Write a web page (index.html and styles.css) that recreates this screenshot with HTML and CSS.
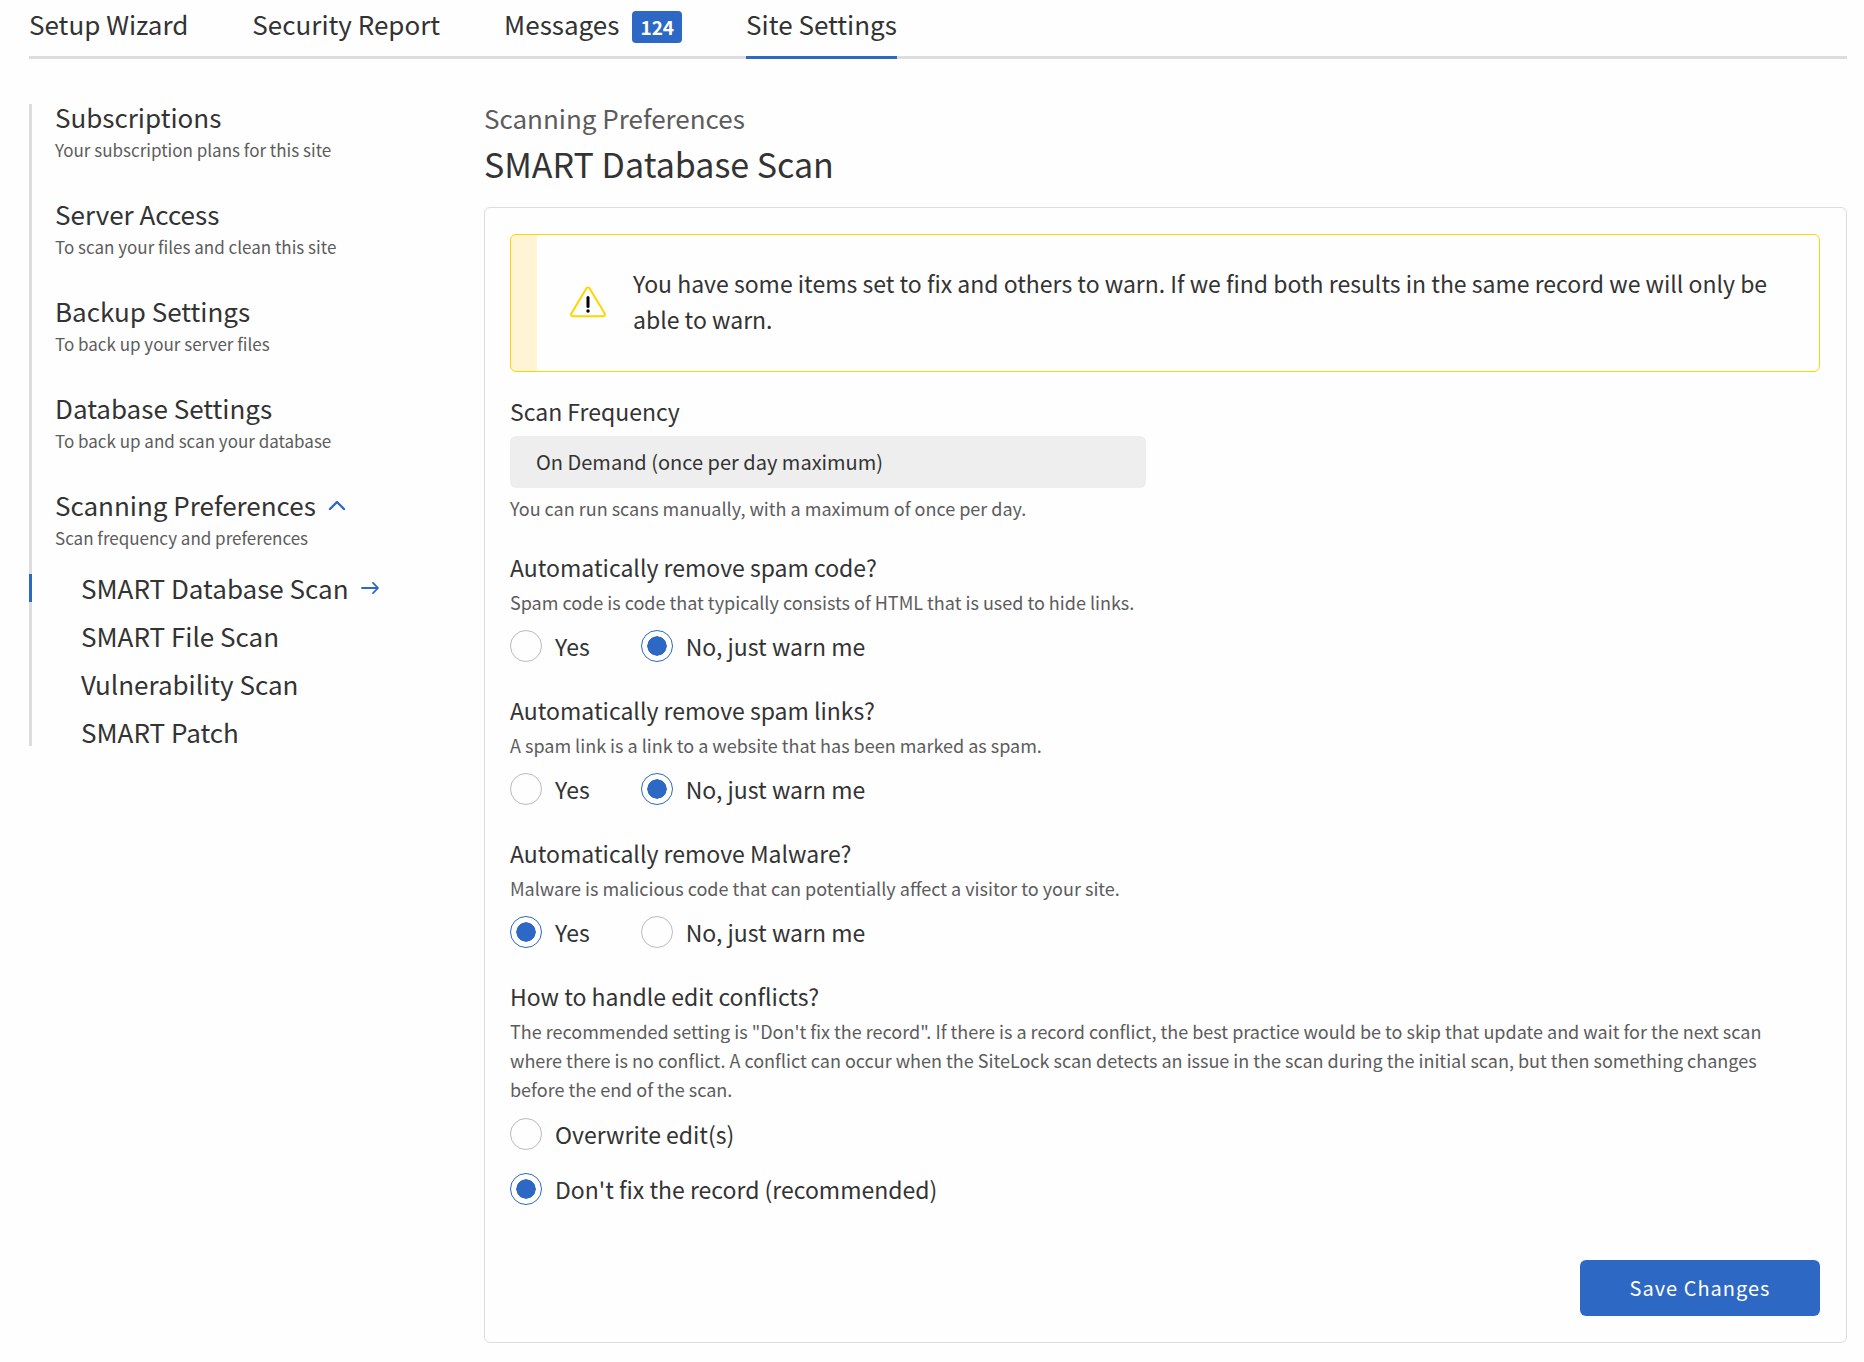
FILE: index.html
```html
<!DOCTYPE html>
<html lang="en">
<head>
<meta charset="utf-8">
<meta name="viewport" content="width=device-width, initial-scale=1">
<title>Site Settings</title>
<link rel="stylesheet" href="styles.css">
</head>
<body>
<nav class="tabs" aria-label="Main">
  <a class="tab" href="#setup">Setup Wizard</a>
  <a class="tab" href="#report">Security Report</a>
  <a class="tab" href="#messages">Messages <span class="badge">124</span></a>
  <a class="tab tab-active" href="#settings" aria-current="page">Site Settings</a>
</nav>
<div class="layout">
  <nav class="sidebar" aria-label="Site settings">
    <a class="side-item" href="#subscriptions"><span class="side-title">Subscriptions</span><span class="side-note">Your subscription plans for this site</span></a>
    <a class="side-item" href="#server"><span class="side-title">Server Access</span><span class="side-note">To scan your files and clean this site</span></a>
    <a class="side-item" href="#backup"><span class="side-title">Backup Settings</span><span class="side-note">To back up your server files</span></a>
    <a class="side-item" href="#database"><span class="side-title">Database Settings</span><span class="side-note">To back up and scan your database</span></a>
    <a class="side-item" href="#scanning"><span class="side-title">Scanning Preferences
      <svg class="side-icon" width="18" height="18" viewBox="0 0 18 18" fill="none" stroke="currentColor" stroke-width="2.4" stroke-linecap="round" stroke-linejoin="round" aria-hidden="true"><path d="M2 13 9 6l7 7"/></svg></span><span class="side-note">Scan frequency and preferences</span></a>
    <ul class="sub-list">
      <li><a class="sub-item sub-active" href="#db-scan" aria-current="page">SMART Database Scan
        <svg class="side-icon" width="18" height="18" viewBox="0 0 18 18" fill="none" stroke="currentColor" stroke-width="1.8" stroke-linecap="round" stroke-linejoin="round" aria-hidden="true"><path d="M1 9h16M12 3.800 17 9l-5 5.200"/></svg></a></li>
      <li><a class="sub-item" href="#file-scan">SMART File Scan</a></li>
      <li><a class="sub-item" href="#vuln-scan">Vulnerability Scan</a></li>
      <li><a class="sub-item" href="#patch">SMART Patch</a></li>
    </ul>
  </nav>
  <main class="main">
    <p class="section-name">Scanning Preferences</p>
    <h1 class="page-title">SMART Database Scan</h1>
    <form class="card">
      <div class="alert" role="alert">
        <svg class="alert-icon" width="36" height="32" viewBox="0 0 36 32" fill="none" aria-hidden="true">
          <path d="M16.600 2.100a1.800 1.800 0 0 1 2.800 0L34.700 27.600a1.700 1.700 0 0 1-1.500 2.600H2.800a1.700 1.700 0 0 1-1.500-2.600z" stroke="#ffd500" stroke-width="2"/>
          <path d="M18 11.500v9" stroke="#000" stroke-width="3" stroke-linecap="round"/>
          <circle cx="18" cy="25" r="1.700" fill="#000"/>
        </svg>
        <p class="alert-text">You have some items set to fix and others to warn. If we find both results in the same record we will only be able to warn.</p>
      </div>
      <div class="field">
        <label class="question" for="frequency">Scan Frequency</label>
        <input class="readonly" id="frequency" type="text" value="On Demand (once per day maximum)" readonly>
        <p class="help">You can run scans manually, with a maximum of once per day.</p>
      </div>
      <fieldset class="group">
        <legend class="question">Automatically remove spam code?</legend>
        <p class="help">Spam code is code that typically consists of HTML that is used to hide links.</p>
        <div class="options">
          <label class="option"><input class="radio" type="radio" name="code">Yes</label>
          <label class="option"><input class="radio" type="radio" name="code" checked>No, just warn me</label>
        </div>
      </fieldset>
      <fieldset class="group">
        <legend class="question">Automatically remove spam links?</legend>
        <p class="help">A spam link is a link to a website that has been marked as spam.</p>
        <div class="options">
          <label class="option"><input class="radio" type="radio" name="links">Yes</label>
          <label class="option"><input class="radio" type="radio" name="links" checked>No, just warn me</label>
        </div>
      </fieldset>
      <fieldset class="group">
        <legend class="question">Automatically remove Malware?</legend>
        <p class="help">Malware is malicious code that can potentially affect a visitor to your site.</p>
        <div class="options">
          <label class="option"><input class="radio" type="radio" name="malware" checked>Yes</label>
          <label class="option"><input class="radio" type="radio" name="malware">No, just warn me</label>
        </div>
      </fieldset>
      <fieldset class="group">
        <legend class="question">How to handle edit conflicts?</legend>
        <p class="help">The recommended setting is "Don't fix the record". If there is a record conflict, the best practice would be to skip that update and wait for the next scan where there is no conflict. A conflict can occur when the SiteLock scan detects an issue in the scan during the initial scan, but then something changes before the end of the scan.</p>
        <div class="options options-stacked">
          <label class="option"><input class="radio" type="radio" name="conflicts">Overwrite edit(s)</label>
          <label class="option"><input class="radio" type="radio" name="conflicts" checked>Don't fix the record (recommended)</label>
        </div>
      </fieldset>
      <div class="actions"><button class="save" type="submit">Save Changes</button></div>
    </form>
  </main>
</div>
</body>
</html>
```

FILE: styles.css
```css
* { box-sizing: border-box; }

body {
  margin: 0;
  padding: 0 17px 18px 29px;
  background: #fefefe;
  color: #333;
  font-family: "Noto Sans CJK JP", "Noto Sans CJK SC", sans-serif;
  font-size: 23px;
  line-height: 32px;
}

p, h1, ul, fieldset, legend { margin: 0; padding: 0; border: 0; font-weight: 400; }
ul { list-style: none; }
a { color: inherit; text-decoration: none; }
fieldset { min-width: 0; }

/* Top tabs */
.tabs {
  display: flex;
  gap: 64px;
  box-shadow: inset 0 -3px #ddd;
  font-size: 26px;
}
.tab {
  display: flex;
  align-items: baseline;
  gap: 13px;
  padding: 8px 0 16px;
  border-bottom: 3px solid transparent;
}
.tab-active { border-bottom-color: #2d68c4; }
.badge {
  height: 32px;
  margin-bottom: -8px;
  padding: 0 8px;
  border-radius: 4px;
  background: #2d68c4;
  color: #fff;
  font-size: 19px;
  font-weight: 700;
}

.layout {
  display: grid;
  grid-template-columns: 455px minmax(0, 1fr);
  align-items: start;
  padding-top: 45px;
}

/* Sidebar */
.sidebar {
  border-left: 3px solid #ddd;
  font-size: 26px;
  line-height: 28px;
}
.side-item {
  display: flex;
  flex-direction: column;
  gap: 8px;
  margin-bottom: 39px;
  padding-left: 23px;
}
.side-title, .sub-item { display: flex; align-items: center; gap: 12px; }
.side-title { line-height: 26px; }
.side-note { color: #5c5c5c; font-size: 17px; line-height: 24px; }
.side-icon { color: #2d68c4; }
.sub-list { display: grid; gap: 20px; margin-top: -15px; }
.sub-item {
  margin-left: -3px;
  padding-left: 49px;
  border-left: 3px solid transparent;
}
.sub-active { border-left-color: #2d68c4; }

/* Main column */
.section-name { color: #5c5c5c; font-size: 26px; line-height: 28px; }
.page-title { margin: 10px 0 21px; font-size: 34px; line-height: 44px; }
.card {
  padding: 26px 26px 26px 25px;
  border: 1px solid #ddd;
  border-radius: 6px;
}

.alert {
  display: flex;
  align-items: center;
  gap: 27px;
  margin-bottom: 23px;
  padding: 30px 48px 34px 59px;
  border: 1px solid #ffd500;
  border-radius: 6px;
  background: linear-gradient(to right, #fff5d6 26px, transparent 26px);
}
.alert-icon { flex: none; margin-top: 2px; }
.alert-text { line-height: 36px; }

.question { display: block; margin-bottom: 5px; }
.help { max-width: 1290px; color: #5c5c5c; font-size: 18px; line-height: 29px; }
.field { margin-bottom: 28px; }
.readonly {
  display: block;
  width: 636px;
  max-width: 100%;
  height: 52px;
  margin: 9px 0 6px;
  padding: 0 26px 2px;
  border: 0;
  border-radius: 6px;
  background: #eee;
  color: #333;
  font: inherit;
  font-size: 20px;
}

.group + .group { margin-top: 32px; }
.options { display: flex; gap: 51px; margin-top: 13px; }
.options-stacked { flex-direction: column; gap: 23px; margin-top: 14px; }
.option { display: flex; align-items: center; gap: 13px; }
.radio {
  appearance: none;
  flex: none;
  width: 32px;
  height: 32px;
  margin: 0;
  padding: 5px;
  border: 1px solid #bbb;
  border-radius: 50%;
}
.radio:checked {
  border-color: #2d68c4;
  background: radial-gradient(circle closest-side, #2d68c4 95%, transparent) content-box no-repeat;
}

.actions { display: flex; justify-content: flex-end; margin-top: 55px; }
.save {
  width: 240px;
  height: 56px;
  border: 0;
  border-radius: 6px;
  background: #2d68c4;
  color: #fff;
  font: inherit;
  font-size: 20px;
  letter-spacing: 1px;
}
```
